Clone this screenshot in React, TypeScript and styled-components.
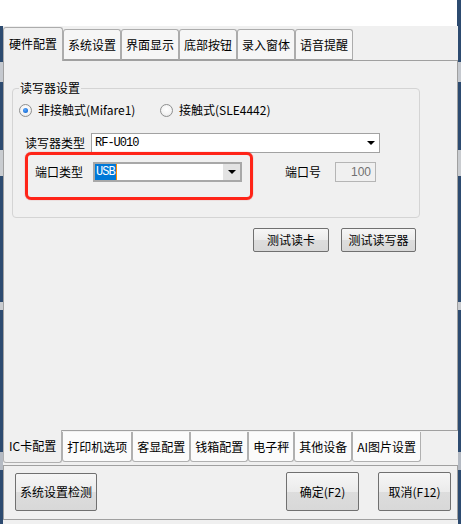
import React from "react";
import styled, { createGlobalStyle } from "styled-components";

const Global = createGlobalStyle`
  html, body { margin: 0; padding: 0; }
  body {
    width: 461px;
    height: 524px;
    overflow: hidden;
    background: #2d4b70;
    font-family: "Noto Sans CJK SC", "Liberation Sans", sans-serif;
    font-size: 12px;
    color: #000;
  }
`;

const Screen = styled.div`
  width: 461px;
  height: 524px;
  display: flex;
  flex-direction: column;
  background: linear-gradient(
    to bottom,
    #2d4b70 0 62px,
    #c5c9cf 62px 82px,
    #2d4b70 82px 150px,
    #c9ccd0 150px 176px,
    #2d4b70 176px 302px,
    #c9ccd0 302px 310px,
    #2d4b70 310px 452px,
    #b4bac3 452px 470px,
    #2d4b70 470px
  );
`;

const TitleStrip = styled.div`
  flex-shrink: 0;
  width: 457px;
  height: 26px;
  background: #ffffff;
`;

const Dialog = styled.div`
  margin-left: 3px;
  width: 455px;
  flex: 1;
  background: #f0f0f0;
  display: flex;
  flex-direction: column;
`;

const TopTabBar = styled.div`
  height: 34px;
  display: flex;
  align-items: flex-end;
`;

const TopTab = styled.div<{ $active?: boolean }>`
  position: relative;
  z-index: ${(p) => (p.$active ? 1 : 0)};
  box-sizing: border-box;
  height: ${(p) => (p.$active ? 34 : 31)}px;
  margin-bottom: ${(p) => (p.$active ? -1 : 0)}px;
  padding: 0 ${(p) => (p.$active ? 5 : 4)}px ${(p) => (p.$active ? 1 : 0)}px;
  display: flex;
  align-items: center;
  border: 1px solid #acacac;
  border-bottom: ${(p) => (p.$active ? "none" : "1px solid #a0a0a0")};
  border-radius: 3px 3px 0 0;
  background: ${(p) => (p.$active ? "#f0f0f0" : "#f6f6f6")};
  line-height: 16px;
  white-space: nowrap;
`;

const MainPanel = styled.div`
  box-sizing: border-box;
  height: 370px;
  border: 1px solid #a0a0a0;
  border-bottom: none;
  padding-left: 8px;
  display: flex;
  flex-direction: column;
  align-items: flex-start;
`;

const GroupBox = styled.fieldset`
  box-sizing: border-box;
  width: 408px;
  min-width: 0;
  margin: 19px 0 0 0;
  padding: 0 0 17px 0;
  border: 1px solid #d4d4d4;
  border-radius: 4px;
`;

const GroupTitle = styled.legend`
  margin-left: 6px;
  padding: 0 1px;
  line-height: 16px;
  font-size: 12px;
`;

const RadioRow = styled.div`
  margin-top: 6px;
  height: 16px;
  padding-left: 6px;
  display: flex;
  align-items: center;
`;

const RadioOption = styled.label<{ $width?: number }>`
  display: flex;
  align-items: center;
  gap: 6px;
  width: ${(p) => (p.$width ? `${p.$width}px` : "auto")};
  line-height: 16px;
  white-space: nowrap;
`;

const RadioCircle = styled.span<{ $checked?: boolean }>`
  position: relative;
  box-sizing: border-box;
  width: 13px;
  height: 13px;
  border-radius: 50%;
  border: 1px solid #8e8f8f;
  background: radial-gradient(circle at 50% 40%, #ffffff 0, #f4f4f4 55%, #dcdcdc 100%);
  flex-shrink: 0;
  &::after {
    content: "";
    display: ${(p) => (p.$checked ? "block" : "none")};
    position: absolute;
    left: 3px;
    top: 3px;
    width: 5px;
    height: 5px;
    border-radius: 50%;
    background: radial-gradient(circle at 40% 35%, #5aa8ff 0, #1a6fd6 70%, #0d57b4 100%);
  }
`;

const FieldRow = styled.div<{ $top: number }>`
  margin-top: ${(p) => p.$top}px;
  padding-left: 12px;
  display: flex;
  align-items: flex-start;
`;

const FieldLabel = styled.span<{ $gap?: number }>`
  line-height: 20px;
  margin-right: ${(p) => p.$gap ?? 0}px;
  white-space: nowrap;
`;

const Combo = styled.div<{ $width: number }>`
  box-sizing: border-box;
  width: ${(p) => p.$width}px;
  height: 20px;
  border: 1px solid #a2a2a2;
  background: #ffffff;
  display: flex;
  align-items: center;
  padding-left: 3px;
  line-height: 16px;
`;

const ComboText = styled.span`
  flex: 1;
  font-family: "Liberation Mono", "Noto Sans CJK SC", monospace;
  font-size: 12px;
  letter-spacing: -1px;
`;

const ArrowBox = styled.span<{ $shaded?: boolean }>`
  width: 17px;
  height: 100%;
  display: flex;
  align-items: center;
  justify-content: center;
  background: ${(p) => (p.$shaded ? "#e3e3e3" : "transparent")};
  &::before {
    content: "";
    border-left: 4px solid transparent;
    border-right: 4px solid transparent;
    border-top: 4px solid #000;
  }
`;

const HighlightBox = styled.div`
  box-sizing: border-box;
  width: 228px;
  height: 48px;
  border: 3px solid #ff2418;
  border-radius: 6px;
  box-shadow: 0 0 1px rgba(190, 0, 0, 0.7);
  padding: 7px 0 0 7px;
  display: flex;
  align-items: flex-start;
`;

const UsbCombo = styled.div`
  box-sizing: border-box;
  width: 149px;
  height: 20px;
  border: 2px solid #a8a8a8;
  background: #ffffff;
  display: flex;
  align-items: stretch;
  padding-left: 0;
`;

const UsbValue = styled.span`
  flex: 1;
  display: flex;
  align-items: center;
`;

const Selected = styled.span`
  background: #0078d7;
  color: #ffffff;
  line-height: 16px;
  padding: 0 1px;
  font-family: "Liberation Mono", "Noto Sans CJK SC", monospace;
  letter-spacing: -1px;
  border-right: 1px solid #ff8a00;
`;

const PortGroup = styled.div`
  margin-left: 32px;
  margin-top: 10px;
  display: flex;
  align-items: center;
`;

const NumberBox = styled.div`
  box-sizing: border-box;
  width: 41px;
  height: 20px;
  margin-left: 14px;
  border: 1px solid #b5b5b5;
  background: #f0f0f0;
  color: #707070;
  text-align: right;
  padding-right: 4px;
  line-height: 18px;
  font-family: "Liberation Sans", sans-serif;
  font-size: 12px;
`;

const ActionRow = styled.div`
  align-self: stretch;
  margin-top: 10px;
  padding-right: 41px;
  display: flex;
  justify-content: flex-end;
  gap: 12px;
`;

const PushButton = styled.button<{ $w: number; $h: number; $top?: number; $left?: string }>`
  box-sizing: border-box;
  width: ${(p) => p.$w}px;
  height: ${(p) => p.$h}px;
  margin-top: ${(p) => p.$top ?? 0}px;
  margin-left: ${(p) => p.$left ?? "0"};
  padding: 0;
  border: 1px solid #707070;
  border-radius: 2px;
  background: linear-gradient(to bottom, #f6f6f6 0%, #ebebeb 50%, #dddddd 51%, #d8d8d8 100%);
  font-family: "Noto Sans CJK SC", "Liberation Sans", sans-serif;
  font-size: 12px;
  color: #000;
  line-height: 16px;
  white-space: nowrap;
`;

const BottomTabBar = styled.div`
  height: 32px;
  border-top: 1px solid #a0a0a0;
  display: flex;
  align-items: flex-start;
`;

const BottomTab = styled.div<{ $active?: boolean }>`
  position: relative;
  z-index: ${(p) => (p.$active ? 1 : 0)};
  box-sizing: border-box;
  height: ${(p) => (p.$active ? 33 : 30)}px;
  margin-top: ${(p) => (p.$active ? -1 : 1)}px;
  padding: ${(p) => (p.$active ? "0 5px" : "0 4px")};
  display: flex;
  align-items: center;
  border: 1px solid #b0b0b0;
  border-top: none;
  border-radius: 0 0 3px 3px;
  background: ${(p) => (p.$active ? "#f0f0f0" : "#fbfbfb")};
  line-height: 16px;
  white-space: nowrap;
`;

const ButtonPanel = styled.div`
  box-sizing: border-box;
  height: 55px;
  margin-top: 2px;
  border: 1px solid #a0a0a0;
  padding: 0 6px 0 11px;
  display: flex;
  align-items: flex-start;
`;

const topTabs = ["硬件配置", "系统设置", "界面显示", "底部按钮", "录入窗体", "语音提醒"];
const bottomTabs = ["IC卡配置", "打印机选项", "客显配置", "钱箱配置", "电子秤", "其他设备", "AI图片设置"];

export default function App() {
  return (
    <>
      <Global />
      <Screen>
        <TitleStrip />
        <Dialog>
          <TopTabBar>
            {topTabs.map((t, i) => (
              <TopTab key={t} $active={i === 0}>
                {t}
              </TopTab>
            ))}
          </TopTabBar>
          <MainPanel>
            <GroupBox>
              <GroupTitle>读写器设置</GroupTitle>
              <RadioRow>
                <RadioOption $width={141}>
                  <RadioCircle $checked />
                  非接触式(Mifare1)
                </RadioOption>
                <RadioOption>
                  <RadioCircle />
                  接触式(SLE4442)
                </RadioOption>
              </RadioRow>
              <FieldRow $top={15}>
                <FieldLabel $gap={6}>读写器类型</FieldLabel>
                <Combo $width={289}>
                  <ComboText>RF-U010</ComboText>
                  <ArrowBox />
                </Combo>
              </FieldRow>
              <FieldRow $top={-1}>
                <HighlightBox>
                  <FieldLabel $gap={10}>端口类型</FieldLabel>
                  <UsbCombo>
                    <UsbValue>
                      <Selected>USB</Selected>
                    </UsbValue>
                    <ArrowBox $shaded />
                  </UsbCombo>
                </HighlightBox>
                <PortGroup>
                  <FieldLabel>端口号</FieldLabel>
                  <NumberBox>100</NumberBox>
                </PortGroup>
              </FieldRow>
            </GroupBox>
            <ActionRow>
              <PushButton $w={76} $h={24}>测试读卡</PushButton>
              <PushButton $w={75} $h={24}>测试读写器</PushButton>
            </ActionRow>
          </MainPanel>
          <BottomTabBar>
            {bottomTabs.map((t, i) => (
              <BottomTab key={t} $active={i === 0}>
                {t}
              </BottomTab>
            ))}
          </BottomTabBar>
          <ButtonPanel>
            <PushButton $w={82} $h={38} $top={7}>系统设置检测</PushButton>
            <PushButton $w={73} $h={39} $top={6} $left="auto">确定(F2)</PushButton>
            <PushButton $w={73} $h={39} $top={6} $left="19px">取消(F12)</PushButton>
          </ButtonPanel>
        </Dialog>
      </Screen>
    </>
  );
}
